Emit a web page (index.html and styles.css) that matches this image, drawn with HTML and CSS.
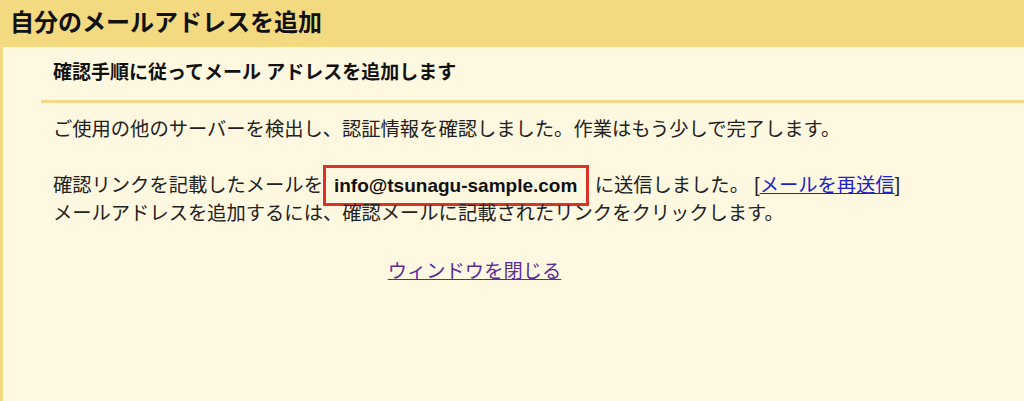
FILE: index.html
```html
<!DOCTYPE html>
<html lang="ja">
<head>
  <meta charset="UTF-8" />
  <meta name="viewport" content="width=device-width, initial-scale=1.0"/>
  <title>自分のメールアドレスを追加</title>
  <link rel="stylesheet" href="styles.css">
</head>
<body>
  <div class="header">
    <h1>自分のメールアドレスを追加</h1>
  </div>

  <div class="panel">
    <h2 class="subhead">確認手順に従ってメール アドレスを追加します</h2>
    <div class="rule"></div>

    <div class="content">
      <p>ご使用の他のサーバーを検出し、認証情報を確認しました。作業はもう少しで完了します。</p>
      <p>
        確認リンクを記載したメールを<span class="email">info@tsunagu-sample.com</span> に送信しました。 [<a href="#" class="resend">メールを再送信</a>]<br>
        メールアドレスを追加するには、確認メールに記載されたリンクをクリックします。
      </p>
      <p class="close"><a href="#">ウィンドウを閉じる</a></p>
    </div>
  </div>
</body>
</html>
```

FILE: styles.css
```css
* {
  box-sizing: border-box;
}

body {
  margin: 0;
  height: 100vh;
  font-family: "Liberation Sans", "Noto Sans CJK JP", sans-serif;
  background: #fef8e1;
  color: #222;
}

.header {
  height: 47px;
  padding-left: 10px;
  background: #f3d97f;
}

.header h1 {
  margin: 0;
  font-size: 24px;
  line-height: 46px;
  font-weight: 700;
  color: #111;
}

.panel {
  height: calc(100vh - 47px);
  border-left: 3px solid #f3d97f;
}

.subhead {
  margin: 0;
  padding: 12px 0 0 50px;
  font-size: 19px;
  line-height: 28px;
  font-weight: 700;
  color: #111;
}

.rule {
  margin: 13px 0 0 38px;
  border-top: 3px solid #f1d98b;
}

.content {
  padding: 13px 0 0 50px;
}

.content p {
  margin: 0 0 28px;
  font-size: 19.3px;
  line-height: 28px;
}

.email {
  padding: 7px 9px 7px 8px;
  border: 3px solid #d8342c;
  font-size: 19px;
  font-weight: 700;
  color: #111;
}

.resend {
  color: #1d23c4;
}

.close {
  width: 843px;
  padding-top: 2px;
  text-align: center;
}

.close a {
  color: #5a2d9c;
}
```
